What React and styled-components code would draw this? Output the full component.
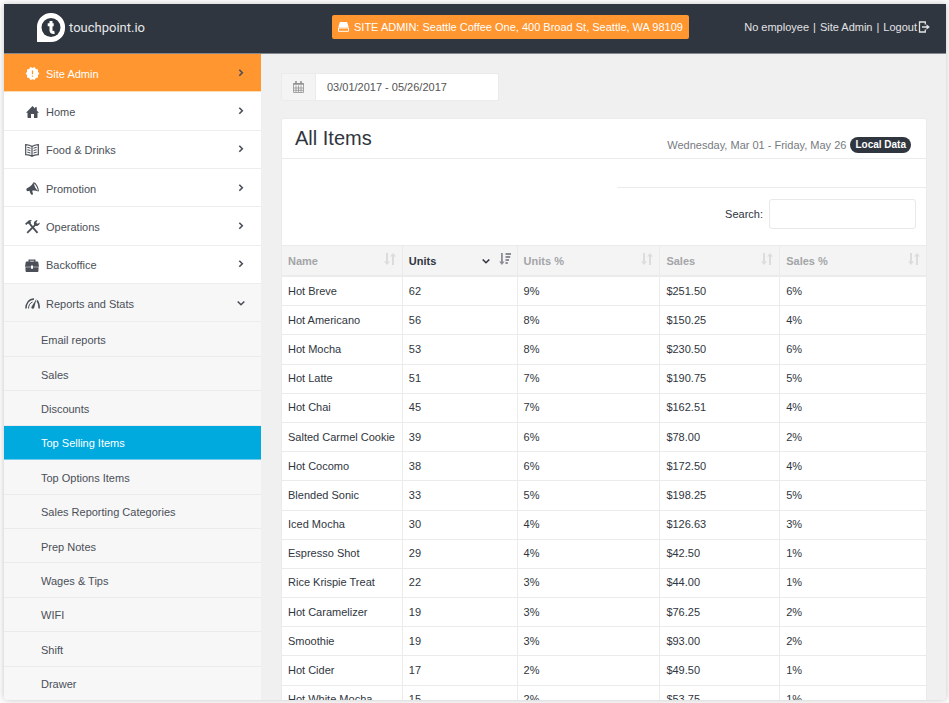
import React from "react";
import styled, { createGlobalStyle, css } from "styled-components";
import { MdNewReleases } from "react-icons/md";

const GlobalStyle = createGlobalStyle`
  *, *::before, *::after { box-sizing: border-box; }
  body {
    margin: 0;
    background: #fcfcfc;
    color: #303640;
    font-family: "Liberation Sans", Arial, sans-serif;
    font-size: 11px;
  }
  button, input { font: inherit; color: inherit; }
  a { color: inherit; text-decoration: none; }
  ul { list-style: none; margin: 0; padding: 0; }
`;

const Page = styled.div`
  height: 100vh;
  padding: 4px 3px 3px 4px;
  overflow: hidden;
`;

const Window = styled.div`
  display: flex;
  flex-direction: column;
  height: 100%;
  overflow: hidden;
  background: #f0f0f0;
  border-radius: 0 0 4px 4px;
  box-shadow: 0 0 6px rgba(0, 0, 0, 0.22);
`;

const TopBar = styled.header`
  flex: none;
  display: flex;
  align-items: center;
  height: 50px;
  padding: 0 16px 4px 0;
  background: #303640;
  border-bottom: 1px solid #85888e;
  color: #e2e3e5;
`;

const Brand = styled.a`
  flex: none;
  display: flex;
  align-items: center;
  gap: 4px;
  width: 257px;
  padding: 2px 0 0 33px;
  font-family: Roboto, sans-serif;
  font-size: 13px;
  color: #e6e7e9;
`;

const SiteSlot = styled.div`
  flex: 1;
  padding-left: 71px;
`;

const SiteButton = styled.button`
  display: inline-flex;
  align-items: center;
  gap: 5px;
  height: 24px;
  padding: 0 6px;
  border: 0;
  border-radius: 2px;
  background: #ff9630;
  color: #fff;
  white-space: nowrap;
`;

const UserLinks = styled.nav`
  display: flex;
  align-items: center;
  gap: 4px;
  white-space: nowrap;

  a { display: inline-flex; align-items: center; gap: 1px; }
`;

const Body = styled.div`
  flex: 1;
  display: flex;
  min-height: 0;
`;

const Sidebar = styled.nav`
  flex: none;
  width: 257px;
  background: #f7f7f7;

  & > ul { display: flex; flex-direction: column; height: 100%; }
`;

const tones = {
  accent: css`background: #ff9630; color: #fff;`,
  plain: css`background: #fff; color: #4a4f58;`,
  open: css`background: #f7f7f7; color: #4a4f58;`,
};

const MenuItem = styled.li`
  flex: 9 1 0;
  min-height: 24px;
  display: flex;
  padding-top: 2px;
  border-bottom: 1px solid ${(p) => (p.$tone === "accent" ? "#ffd9b0" : "#ededed")};
  ${(p) => tones[p.$tone]}
`;

const MenuButton = styled.button`
  flex: 1;
  display: flex;
  align-items: center;
  gap: 6px;
  padding: 0 15px 0 20px;
  border: 0;
  background: none;
  text-align: left;
`;

const MenuIcon = styled.span`
  display: flex;
  justify-content: center;
  width: 16px;
`;

const MenuLabel = styled.span`
  flex: 1;
`;

const Caret = styled.span`
  display: flex;
  padding-bottom: 2px;
  color: #4a4f58;
`;

const SubItem = styled.li`
  flex: 8 1 0;
  min-height: 20px;
  display: flex;
  padding-top: 2px;
  border-bottom: 1px solid ${(p) => (p.$active ? "#6fcdec" : "#ebebeb")};
  background: ${(p) => (p.$active ? "#00aadf" : "#f7f7f7")};
  color: ${(p) => (p.$active ? "#fff" : "#4a4f58")};

  &:last-child { border-bottom: 0; }
  a { flex: 1; display: flex; align-items: center; padding-left: 37px; }
`;

const Main = styled.main`
  flex: 1;
  min-width: 0;
  padding: 19px 19px 0 20px;
`;

const DateRange = styled.label`
  display: flex;
  width: 218px;
  height: 28px;
  margin-bottom: 17px;
  border: 1px solid #ebebeb;
  border-radius: 2px;
  background: #fff;
`;

const DateAddon = styled.span`
  flex: none;
  display: flex;
  align-items: center;
  justify-content: center;
  width: 34px;
  background: #f4f4f4;
  border-right: 1px solid #ebebeb;
  color: #929292;
`;

const DateInput = styled.input`
  flex: 1;
  min-width: 0;
  padding: 0 11px;
  border: 0;
  background: none;
  color: #555;
`;

const Card = styled.section`
  background: #fff;
  border: 1px solid #ebebeb;
  border-radius: 3px;
`;

const CardHeader = styled.header`
  display: flex;
  justify-content: space-between;
  height: 40px;
  padding: 0 15px 0 13px;
  border-bottom: 1px solid #ebebeb;
`;

const Title = styled.h1`
  margin: 0;
  font-size: 20px;
  line-height: 38px;
  font-weight: 500;
`;

const Period = styled.div`
  display: flex;
  align-items: center;
  gap: 4px;
  padding-top: 13px;
  color: #777b80;
`;

const Badge = styled.span`
  padding: 0 5px;
  border-radius: 8px;
  background: #303640;
  color: #fff;
  font-size: 10px;
  font-weight: 700;
  line-height: 16px;
`;

const Toolbar = styled.div`
  display: flex;
  justify-content: flex-end;
  padding-top: 28px;
`;

const SearchLabel = styled.label`
  display: flex;
  align-items: center;
  justify-content: flex-end;
  gap: 6px;
  width: 48%;
  padding: 11px 10px 16px;
  border-top: 1px solid #ebebeb;
`;

const SearchInput = styled.input`
  width: 147px;
  height: 30px;
  padding: 0 8px;
  border: 1px solid #e9e9e9;
  border-radius: 3px;
  background: #fff;
`;

const Table = styled.table`
  width: 100%;
  height: 470px;
  table-layout: fixed;
  border-collapse: separate;
  border-spacing: 0;
  border-top: 1px solid #ebebeb;
`;

const Column = styled.col`
  width: calc(100% * ${(p) => p.$share} / 645);
`;

const HeadCell = styled.th`
  height: 31px;
  padding: 0 6px;
  background: #f4f4f4;
  border-bottom: 2px solid #ebebeb;
  border-right: 1px solid #ebebeb;
  color: ${(p) => (p.$sorted ? "#303640" : "#a3a5a8")};
  text-align: left;

  &:last-child { border-right: 0; }
`;

const SortButton = styled.button`
  display: flex;
  align-items: center;
  gap: 8px;
  width: 100%;
  padding: 0;
  border: 0;
  background: none;
  font-weight: 700;
`;

const SortLabel = styled.span`
  flex: 1;
  text-align: left;
`;

const SortMark = styled.span`
  display: flex;
  padding-bottom: 3px;
  color: ${(p) => (p.$sorted ? "#8b8e94" : "#dcdcdc")};
`;

const Cell = styled.td`
  padding: 0 6px;
  border-bottom: 1px solid #ebebeb;
  border-right: 1px solid #ebebeb;
  line-height: 17px;
  white-space: nowrap;

  &:last-child { border-right: 0; }
`;

const LogoMark = () => (
  <svg width="28" height="29" viewBox="0 0 28 29" aria-hidden="true">
    <path fill="#fff" d="M14 0a14 14 0 0 1 14 14.500A14 14 0 0 1 14 29H0V14.500A14 14 0 0 1 14 0Z" />
    <circle cx="14" cy="14.500" r="9.500" fill="#303640" />
    <path d="M14 8v9.500q0 2.500 3.500 1.800M10.700 11.700h6" fill="none" stroke="#fff" strokeWidth="3" />
  </svg>
);

const DriveIcon = () => (
  <svg width="11" height="10" viewBox="0 0 11 10" fill="currentColor" aria-hidden="true">
    <path d="M2.500 0h6q.7 0 .9.700L10.700 5.500H.3L1.600.700Q1.800 0 2.500 0Z" />
    <path d="M.5 6h10v3.300H.5Z" fill="none" stroke="currentColor" />
  </svg>
);

const LogoutIcon = () => (
  <svg width="12" height="12" viewBox="0 0 12 12" aria-hidden="true">
    <path fill="none" stroke="currentColor" strokeWidth="1.300" d="M7.300 3.400V1H1.500v10h5.800V8.600M4 6h5" />
    <path fill="currentColor" d="M8.500 3.200 11.800 6 8.500 8.800Z" />
  </svg>
);

const CaretIcon = ({ down }) => (
  <svg width="10" height="10" viewBox="0 0 10 10" fill="none" stroke="currentColor" strokeWidth="1.600" aria-hidden="true">
    <path d={down ? "M1.700 3.500 5 6.700 8.300 3.500" : "M3.300 1.800 6.300 4.800 3.300 7.800"} />
  </svg>
);

const HomeIcon = () => (
  <svg width="13" height="12" viewBox="0 0 13 12" fill="currentColor" aria-hidden="true">
    <path d="M6.500 0 9 2.500V1.200h1.800v3.200l2.200 2.300h-1.500v4.600q0 .7-.7.700H8V8H5v4H2.200q-.7 0-.7-.7V6.700H0Z" />
  </svg>
);

const BookIcon = () => (
  <svg width="14" height="13" viewBox="0 0 14 13" fill="none" stroke="currentColor" strokeWidth="1.200" aria-hidden="true">
    <path d="M7 2.600C5.500 1.500 3.300.9.700.700v10c2.600.2 4.800.6 6.300 1.600 1.500-1 3.700-1.400 6.300-1.600v-10C10.700.9 8.500 1.500 7 2.600Zm0 0v9.700" />
    <path strokeWidth="1" d="M2.300 3.400q1.800.1 3.200.9M2.300 5.800q1.800.1 3.200.9M2.300 8.200q1.800.1 3.200.9M11.700 3.400q-1.800.1-3.200.9M11.700 5.800q-1.800.1-3.200.9M11.700 8.200q-1.800.1-3.200.9" />
  </svg>
);

const MegaphoneIcon = () => (
  <svg width="13" height="13" viewBox="0 0 13 13" aria-hidden="true">
    <path fill="currentColor" d="M7.300.500C6 3.300 3.500 5 1 6.200.1 6.700.2 8.800 1.400 9.200l2.100-.4c.2 1.600 1 2.700 1.800 4l1.800-.4-.9-3.700c2-.3 3.600-.2 5.800.8C10.700 7.500 9 4 7.300.500Z" />
    <path fill="none" stroke="currentColor" strokeWidth="1.200" d="M7.500.900C9.300.200 13 7 12.100 9.300" />
    <path fill="#fff" d="M8.300 2.600c1.300.8 2.500 3.500 2.800 5.400C9.600 6.500 8.500 4.600 8.300 2.600Z" />
  </svg>
);

const ToolsIcon = () => (
  <svg width="15" height="14" viewBox="0 0 15 14" aria-hidden="true">
    <path fill="currentColor" d="M0 3.700 3.300.700C4.500-.1 6-.1 7 .600L5.300 1.500l.9 1.400-2 1.700L3 3.500 1.300 5Z" />
    <path fill="none" stroke="currentColor" strokeWidth="1.800" d="m4.800 3.800 7.700 9" />
    <path fill="none" stroke="currentColor" strokeWidth="1.800" d="m2.200 12.800 8.300-8.200" />
    <path fill="currentColor" d="M12.500 0C9.500.4 8.300 2.700 9.300 5.200c2 1.700 5.300.7 5.600-2.700l-2.100 1.300-1.600-.9Z" />
  </svg>
);

const BriefcaseIcon = () => (
  <svg width="14" height="13" viewBox="0 0 14 13" aria-hidden="true">
    <path fill="none" stroke="currentColor" strokeWidth="1.400" d="M4.200 3V1.100h5.600V3" />
    <path fill="currentColor" d="M1.500 2.600h11q.7 0 .8.700L14 7.700H8V6.500H6v1.200H0l.7-4.400q.1-.7.8-.700ZM.4 8.300H6v1.500h2V8.300h5.600l-.2 3.900q0 .8-.8.800H1.400q-.8 0-.8-.8Z" />
  </svg>
);

const GaugeIcon = () => (
  <svg width="15" height="11" viewBox="0 0 15 11" fill="none" stroke="currentColor" aria-hidden="true">
    <path strokeWidth="1.500" d="M.9 10.500C.9 5.500 4 1 9 1M12 2.500c1.500 1.800 2.200 4.500 2.200 8" />
    <path strokeWidth="1" d="M3.500 10.500c.1-3.300 1.600-5.600 4-6.500" />
    <path fill="currentColor" stroke="none" d="M11.500.700 9.200 9.700Q8.700 11 7.300 10.700 5.800 10.200 6.500 8.700Z" />
  </svg>
);

const CalendarIcon = () => (
  <svg width="11" height="12" viewBox="0 0 11 12" fill="none" stroke="currentColor" aria-hidden="true">
    <path d="M.5 2.500h10v9H.5ZM3 4.500v7M5.500 4.500v7M8 4.500v7M.5 7h10M.5 9.300h10" strokeWidth=".8" />
    <path d="M.5 2.900h10" strokeWidth="1.800" />
    <path d="M3 0v3M8 0v3" strokeWidth="1.600" />
  </svg>
);

const SortIcon = () => (
  <svg width="12" height="12" viewBox="0 0 12 12" fill="currentColor" aria-hidden="true">
    <path d="M2 0h2v8.500h2L3 12 0 8.500h2ZM8 12h2V3.500h2L9 0 6 3.500h2Z" />
  </svg>
);

const SortDownIcon = () => (
  <svg width="12" height="12" viewBox="0 0 12 12" fill="currentColor" aria-hidden="true">
    <path d="M2 0h1.800v8.500h1.800L2.900 12 .2 8.500H2ZM6.500 0H12v2H6.500ZM6.500 3h4.700v2H6.500ZM6.500 6h3.500v2H6.500ZM6.500 9h2.300v2H6.500Z" />
  </svg>
);

const menu = [
  { label: "Site Admin", icon: <MdNewReleases size={15} />, tone: "accent" },
  { label: "Home", icon: <HomeIcon />, tone: "plain" },
  { label: "Food & Drinks", icon: <BookIcon />, tone: "plain" },
  { label: "Promotion", icon: <MegaphoneIcon />, tone: "plain" },
  { label: "Operations", icon: <ToolsIcon />, tone: "plain" },
  { label: "Backoffice", icon: <BriefcaseIcon />, tone: "plain" },
  { label: "Reports and Stats", icon: <GaugeIcon />, tone: "open" },
];

const reports = [
  "Email reports",
  "Sales",
  "Discounts",
  "Top Selling Items",
  "Top Options Items",
  "Sales Reporting Categories",
  "Prep Notes",
  "Wages & Tips",
  "WIFI",
  "Shift",
  "Drawer",
];

const columns = [
  { label: "Name", share: 121 },
  { label: "Units", share: 115 },
  { label: "Units %", share: 143 },
  { label: "Sales", share: 120 },
  { label: "Sales %", share: 146 },
];

const sortedBy = "Units";

const items = [
  ["Hot Breve", "62", "9%", "$251.50", "6%"],
  ["Hot Americano", "56", "8%", "$150.25", "4%"],
  ["Hot Mocha", "53", "8%", "$230.50", "6%"],
  ["Hot Latte", "51", "7%", "$190.75", "5%"],
  ["Hot Chai", "45", "7%", "$162.51", "4%"],
  ["Salted Carmel Cookie", "39", "6%", "$78.00", "2%"],
  ["Hot Cocomo", "38", "6%", "$172.50", "4%"],
  ["Blended Sonic", "33", "5%", "$198.25", "5%"],
  ["Iced Mocha", "30", "4%", "$126.63", "3%"],
  ["Espresso Shot", "29", "4%", "$42.50", "1%"],
  ["Rice Krispie Treat", "22", "3%", "$44.00", "1%"],
  ["Hot Caramelizer", "19", "3%", "$76.25", "2%"],
  ["Smoothie", "19", "3%", "$93.00", "2%"],
  ["Hot Cider", "17", "2%", "$49.50", "1%"],
  ["Hot White Mocha", "15", "2%", "$53.75", "1%"],
];

export default function App() {
  return (
    <Page>
      <GlobalStyle />
      <Window>
        <TopBar>
          <Brand href="#">
            <LogoMark />
            touchpoint.io
          </Brand>
          <SiteSlot>
            <SiteButton type="button">
              <DriveIcon />
              SITE ADMIN: Seattle Coffee One, 400 Broad St, Seattle, WA 98109
            </SiteButton>
          </SiteSlot>
          <UserLinks>
            <a href="#employee">No employee</a>|
            <a href="#admin">Site Admin</a>|
            <a href="#logout">
              Logout
              <LogoutIcon />
            </a>
          </UserLinks>
        </TopBar>
        <Body>
          <Sidebar>
            <ul>
              {menu.map((entry) => (
                <MenuItem key={entry.label} $tone={entry.tone}>
                  <MenuButton type="button" aria-expanded={entry.tone === "open"}>
                    <MenuIcon>{entry.icon}</MenuIcon>
                    <MenuLabel>{entry.label}</MenuLabel>
                    <Caret>
                      <CaretIcon down={entry.tone === "open"} />
                    </Caret>
                  </MenuButton>
                </MenuItem>
              ))}
              {reports.map((label) => (
                <SubItem key={label} $active={label === "Top Selling Items"}>
                  <a href="#report">{label}</a>
                </SubItem>
              ))}
            </ul>
          </Sidebar>
          <Main>
            <DateRange>
              <DateAddon>
                <CalendarIcon />
              </DateAddon>
              <DateInput aria-label="Date range" defaultValue="03/01/2017 - 05/26/2017" />
            </DateRange>
            <Card>
              <CardHeader>
                <Title>All Items</Title>
                <Period>
                  Wednesday, Mar 01 - Friday, May 26
                  <Badge>Local Data</Badge>
                </Period>
              </CardHeader>
              <Toolbar>
                <SearchLabel>
                  Search:
                  <SearchInput type="search" />
                </SearchLabel>
              </Toolbar>
              <Table>
                <colgroup>
                  {columns.map((column) => (
                    <Column key={column.label} $share={column.share} />
                  ))}
                </colgroup>
                <thead>
                  <tr>
                    {columns.map(({ label }) => {
                      const sorted = label === sortedBy;
                      return (
                        <HeadCell key={label} scope="col" $sorted={sorted} aria-sort={sorted ? "descending" : undefined}>
                          <SortButton type="button">
                            <SortLabel>{label}</SortLabel>
                            {sorted && <CaretIcon down />}
                            <SortMark $sorted={sorted}>{sorted ? <SortDownIcon /> : <SortIcon />}</SortMark>
                          </SortButton>
                        </HeadCell>
                      );
                    })}
                  </tr>
                </thead>
                <tbody>
                  {items.map((row) => (
                    <tr key={row[0]}>
                      {row.map((value, index) => (
                        <Cell key={columns[index].label}>{value}</Cell>
                      ))}
                    </tr>
                  ))}
                </tbody>
              </Table>
            </Card>
          </Main>
        </Body>
      </Window>
    </Page>
  );
}
